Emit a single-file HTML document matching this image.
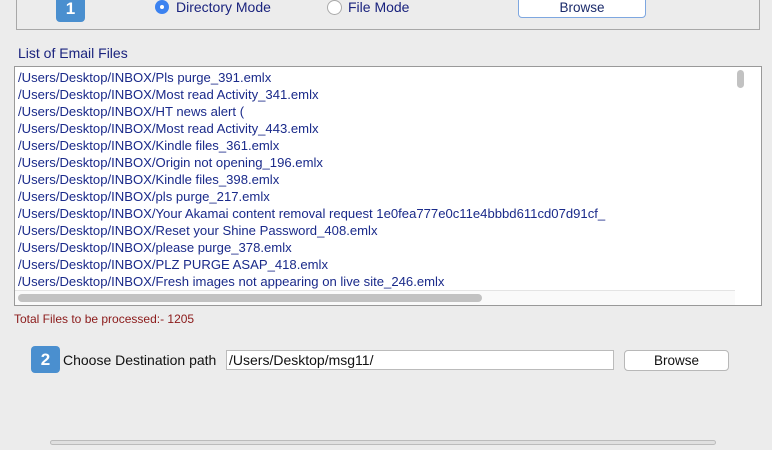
<!DOCTYPE html><html><head><style>
body{margin:0;width:772px;height:450px;background:#ececec;position:relative;overflow:hidden;font-family:"Liberation Sans",sans-serif;font-size:14px;color:#1a237e}
.a{position:absolute}
.badge{background:#4a8fcf;color:#fff;border-radius:4px;text-align:center;font-weight:bold;font-size:17px}
.btn{background:#fff;border:1px solid #b8b8b8;border-radius:4px;text-align:center;color:#111;font-size:13.5px;box-sizing:border-box}
.row{position:absolute;left:3px;white-space:nowrap;color:#1a2a8a;font-size:13.1px}
</style></head><body>
<div class="a" style="left:16px;top:-5px;width:742px;height:34px;border:1px solid #a8a8a8;border-top:none"></div>
<div class="a badge" style="left:56px;top:-4px;width:29px;height:26px;line-height:26px">1</div>
<div class="a" style="left:155px;top:0px;width:14px;height:14px;border-radius:50%;background:#3b82f0"><div class="a" style="left:5px;top:5px;width:4px;height:4px;border-radius:50%;background:#fff"></div></div>
<div class="a" style="left:176px;top:-1px">Directory Mode</div>
<div class="a" style="left:327px;top:0px;width:13px;height:13px;border-radius:50%;background:#fff;border:1px solid #aaa"></div>
<div class="a" style="left:348px;top:-1px">File Mode</div>
<div class="a btn" style="left:518px;top:-4px;width:128px;height:22px;line-height:22px;border-color:#7ea7e0;color:#1a2a6a">Browse</div>
<div class="a" style="left:18px;top:45px">List of Email Files</div>
<div class="a" style="left:14px;top:66px;width:746px;height:238px;border:1px solid #999;background:#fff;overflow:hidden">
<div class="row" style="top:3px">/Users/Desktop/INBOX/Pls purge_391.emlx</div>
<div class="row" style="top:20px">/Users/Desktop/INBOX/Most read Activity_341.emlx</div>
<div class="row" style="top:37px">/Users/Desktop/INBOX/HT news alert (</div>
<div class="row" style="top:54px">/Users/Desktop/INBOX/Most read Activity_443.emlx</div>
<div class="row" style="top:71px">/Users/Desktop/INBOX/Kindle files_361.emlx</div>
<div class="row" style="top:88px">/Users/Desktop/INBOX/Origin not opening_196.emlx</div>
<div class="row" style="top:105px">/Users/Desktop/INBOX/Kindle files_398.emlx</div>
<div class="row" style="top:122px">/Users/Desktop/INBOX/pls purge_217.emlx</div>
<div class="row" style="top:139px">/Users/Desktop/INBOX/Your Akamai content removal request 1e0fea777e0c11e4bbbd611cd07d91cf_</div>
<div class="row" style="top:156px">/Users/Desktop/INBOX/Reset your Shine Password_408.emlx</div>
<div class="row" style="top:173px">/Users/Desktop/INBOX/please purge_378.emlx</div>
<div class="row" style="top:190px">/Users/Desktop/INBOX/PLZ PURGE ASAP_418.emlx</div>
<div class="row" style="top:207px">/Users/Desktop/INBOX/Fresh images not appearing on live site_246.emlx</div>
<div class="a" style="left:0;top:223px;width:720px;height:15px;background:#fafafa;border-top:1px solid #e4e4e4"></div>
<div class="a" style="left:3px;top:227px;width:464px;height:8px;border-radius:4px;background:#c2c2c2"></div>
<div class="a" style="left:722px;top:3px;width:7px;height:18px;border-radius:4px;background:#c2c2c2"></div>
</div>
<div class="a" style="left:14px;top:312px;font-size:12px;color:#8b1a1a">Total Files to be processed:- 1205</div>
<div class="a badge" style="left:31px;top:346px;width:29px;height:27px;line-height:27px">2</div>
<div class="a" style="left:63px;top:352px;color:#111">Choose Destination path</div>
<div class="a" style="left:226px;top:350px;width:388px;height:20px;box-sizing:border-box;background:#fff;border:1px solid #bbb;color:#111;padding:1px 0 0 2px;font-size:14px">/Users/Desktop/msg11/</div>
<div class="a btn" style="left:624px;top:350px;width:105px;height:21px;line-height:20px">Browse</div>
<div class="a" style="left:50px;top:440px;width:666px;height:5px;border:1px solid #bbb;border-radius:3px;background:#e0e0e0;box-sizing:border-box"></div>
</body></html>
